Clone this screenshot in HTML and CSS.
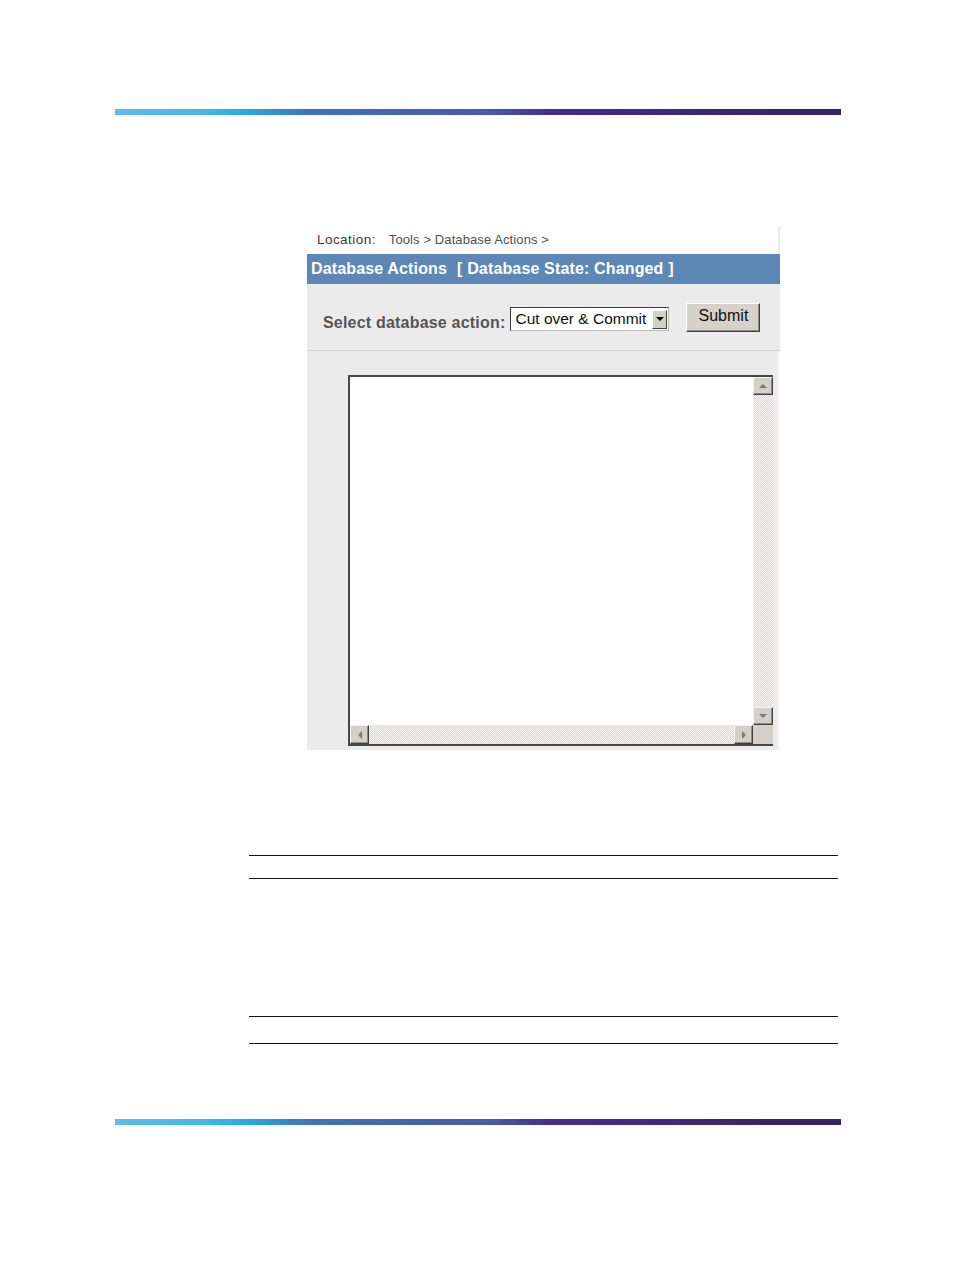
FILE: index.html
```html
<!DOCTYPE html>
<html>
<head>
<meta charset="utf-8">
<link rel="stylesheet" href="styles.css">
</head>
<body>
<div class="page">
  <div class="bar bar-top"></div>

  <div class="figure">
    <div class="location">
      <span class="loc-label">Location:</span>
      <span class="loc-path">Tools &gt; Database Actions &gt;</span>
    </div>
    <div class="header">
      <span>Database Actions</span><span class="state">[ Database State: Changed ]</span>
    </div>
    <div class="controls">
      <span class="ctl-label">Select database action:</span>
      <div class="select">
        <span class="select-text">Cut over &amp; Commit</span>
        <span class="select-btn"><span class="tri-down-black"></span></span>
      </div>
      <div class="submit">Submit</div>
    </div>
    <div class="content">
      <div class="textarea">
        <div class="ta-body"></div>
        <div class="vscroll">
          <div class="sbtn"><span class="tri tri-up"></span></div>
          <div class="track"></div>
          <div class="sbtn"><span class="tri tri-down"></span></div>
        </div>
        <div class="hscroll">
          <div class="sbtn"><span class="tri tri-left"></span></div>
          <div class="track"></div>
          <div class="sbtn"><span class="tri tri-right"></span></div>
        </div>
        <div class="corner"></div>
      </div>
    </div>
  </div>

  <div class="rules">
    <div class="rule r1"></div>
    <div class="rule r2"></div>
    <div class="rule r3"></div>
    <div class="rule r4"></div>
  </div>

  <div class="bar bar-bottom"></div>
</div>
</body>
</html>
```

FILE: styles.css
```css
html, body {
  margin: 0;
  padding: 0;
  background: #ffffff;
}
body {
  font-family: "Liberation Sans", Arial, sans-serif;
}
.page {
  width: 954px;
  height: 1272px;
  display: flex;
  flex-direction: column;
}
.bar {
  width: 726px;
  height: 6px;
  margin-left: 115px;
  background: linear-gradient(90deg, #5cbde9 0%, #47b7e6 12%, #27b0e3 17%, #3f74b8 27%, #4565ac 40%, #4a5aa6 52%, #452c8f 60%, #3f2a86 72%, #382566 90%, #372463 100%);
}
.bar-top {
  margin-top: 109px;
}
.figure {
  margin-top: 111px;
  margin-left: 307px;
  width: 473px;
  display: flex;
  flex-direction: column;
}
.location {
  height: 28px;
  display: flex;
  align-items: center;
  padding-left: 10px;
  padding-bottom: 2px;
  box-sizing: border-box;
  font-size: 13px;
  color: #3a3a3a;
  background: linear-gradient(90deg, #ffffff 0, #ffffff 471px, #ececec 471px);
}
.loc-label {
  font-size: 13.5px;
  letter-spacing: 0.45px;
  margin-right: 13px;
}
.loc-path {
  color: #505050;
  letter-spacing: 0.1px;
}
.header {
  height: 30px;
  background: #5d88b6;
  color: #ffffff;
  font-weight: bold;
  font-size: 16px;
  letter-spacing: 0.15px;
  display: flex;
  align-items: center;
  padding-left: 4px;
}
.state {
  margin-left: 10px;
}
.controls {
  background: #ebebeb;
  border-bottom: 1px solid #d2d2d2;
  display: flex;
  align-items: center;
  padding-left: 16px;
  box-sizing: border-box;
  height: 67px;
}
.ctl-label {
  font-size: 16px;
  font-weight: bold;
  letter-spacing: 0.2px;
  color: #555555;
  margin-top: 12px;
  margin-right: 5px;
}
.select {
  width: 159px;
  height: 24px;
  box-sizing: border-box;
  border: 1px solid #3a3a3a;
  border-right-color: #bbbbbb;
  border-bottom-color: #bbbbbb;
  background: #ffffff;
  display: flex;
  align-items: center;
  margin-top: 4px;
}
.select-text {
  font-size: 15.5px;
  color: #111111;
  padding-left: 4px;
  flex: 1;
  white-space: nowrap;
}
.select-btn {
  width: 15px;
  height: 19px;
  margin-right: 1px;
  background: #d4d0c8;
  box-sizing: border-box;
  border: 1px solid;
  border-color: #ffffff #404040 #404040 #ffffff;
  display: flex;
  align-items: center;
  justify-content: center;
}
.tri-down-black {
  width: 0;
  height: 0;
  border-left: 4px solid transparent;
  border-right: 4px solid transparent;
  border-top: 4px solid #000000;
}
.submit {
  margin-left: 17px;
  width: 74px;
  height: 29px;
  box-sizing: border-box;
  background: #d6d2ca;
  border: 1px solid;
  border-color: #ffffff #404040 #404040 #ffffff;
  box-shadow: inset -1px -1px 0 #8a8a8a;
  font-size: 16px;
  color: #111111;
  display: flex;
  align-items: center;
  justify-content: center;
  padding-bottom: 2px;
  margin-top: 0;
}
.content {
  padding: 24px 7px 4px 41px;
  background: linear-gradient(90deg, #ebebeb 0, #ebebeb 471px, #f8f8f8 471px);
}
.textarea {
  width: 425px;
  height: 371px;
  box-sizing: border-box;
  border-top: 2px solid #474747;
  border-left: 2px solid #474747;
  border-bottom: 2px solid #474747;
  border-right: 0;
  display: grid;
  grid-template-columns: 1fr 20px;
  grid-template-rows: 1fr 19px;
  background: #ffffff;
}
.ta-body {
  background: #ffffff;
}
.vscroll {
  display: flex;
  flex-direction: column;
}
.hscroll {
  display: flex;
}
.track {
  flex: 1;
  background-color: #ffffff;
  background-image: repeating-conic-gradient(#dcd8d2 0 25%, #f6f4f2 0 50%);
  background-size: 2px 2px;
}
.sbtn {
  width: 19px;
  height: 18px;
  box-sizing: border-box;
  background: #d4d0c8;
  border: 1px solid;
  border-color: #f4f2ee #404040 #404040 #f4f2ee;
  box-shadow: inset -1px -1px 0 #8c8c8c;
  display: flex;
  align-items: center;
  justify-content: center;
}
.vscroll .sbtn {
  width: 20px;
}
.hscroll .sbtn {
  height: 19px;
  width: 19px;
}
.corner {
  background: #d4d0c8;
}
.tri {
  width: 0;
  height: 0;
}
.tri-up {
  border-left: 4px solid transparent;
  border-right: 4px solid transparent;
  border-bottom: 4px solid #7a7a7a;
}
.tri-down {
  border-left: 4px solid transparent;
  border-right: 4px solid transparent;
  border-top: 4px solid #7a7a7a;
}
.tri-left {
  border-top: 4px solid transparent;
  border-bottom: 4px solid transparent;
  border-right: 4px solid #7a7a7a;
}
.tri-right {
  border-top: 4px solid transparent;
  border-bottom: 4px solid transparent;
  border-left: 4px solid #7a7a7a;
}
.rules {
  margin-left: 249px;
  width: 589px;
  margin-top: 105px;
  display: flex;
  flex-direction: column;
}
.rule {
  height: 1px;
  background: #111111;
}
.r2 {
  margin-top: 22px;
}
.r3 {
  margin-top: 137px;
}
.r4 {
  margin-top: 26px;
}
.bar-bottom {
  margin-top: 75px;
}
```
